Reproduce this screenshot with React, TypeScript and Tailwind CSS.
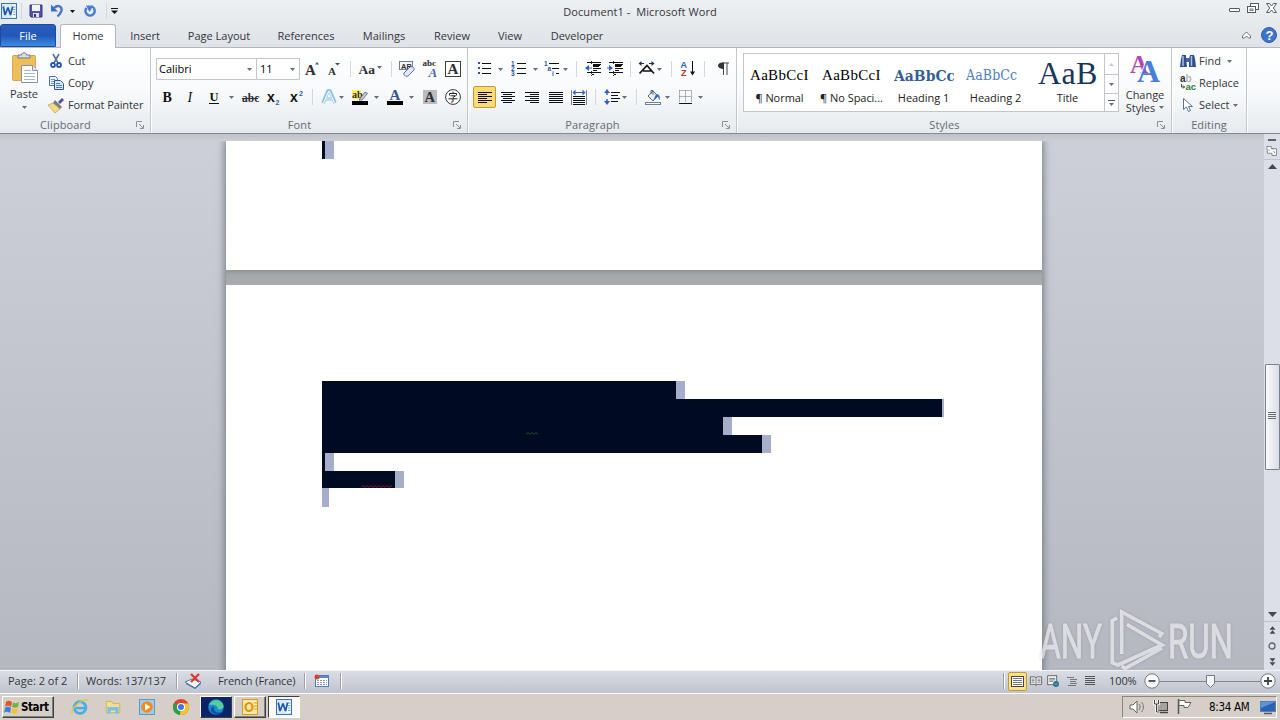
import React from 'react';

type IconProps = { className?: string };

// Small svg wrapper, everything in the ribbon is drawn on a 16px grid
const Svg: React.FC<{ className?: string; box?: string; children: React.ReactNode }> = ({
  className = '',
  box = '0 0 16 16',
  children,
}) => (
  <svg viewBox={box} className={`shrink-0 overflow-visible ${className || 'w-4 h-4'}`}>
    {children}
  </svg>
);

const Drop: React.FC<IconProps> = ({ className = '' }) => (
  <svg viewBox="0 0 5 3" className={`shrink-0 w-[5px] h-[3px] ${className}`}>
    <path d="M0 0h5L2.5 3z" fill="#6a6d72" />
  </svg>
);

const Sep: React.FC<IconProps> = ({ className = '' }) => (
  <div className={`shrink-0 w-px h-4 bg-[#d3d6da] ${className}`} />
);

const Lines: React.FC<{ rows: number[][]; color?: string }> = ({ rows, color = '#111' }) => (
  <>
    {rows.map(([x, y, w], i) => (
      <rect key={i} x={x} y={y} width={w} height="1" fill={color} />
    ))}
  </>
);

const Glyph: React.FC<{
  x: number;
  y: number;
  size: number;
  fill?: string;
  bold?: boolean;
  sans?: boolean;
  italic?: boolean;
  children: string;
}> = ({ x, y, size, fill = '#2d2f33', bold, sans, italic, children }) => (
  <text
    x={x}
    y={y}
    fontSize={size}
    fill={fill}
    fontWeight={bold ? 700 : 400}
    fontStyle={italic ? 'italic' : 'normal'}
    fontFamily={sans ? 'Liberation Sans, sans-serif' : 'Liberation Serif, serif'}
    letterSpacing="0"
  >
    {children}
  </text>
);

const WordIcon: React.FC<IconProps> = ({ className }) => (
  <Svg className={className}>
    <rect x="0.5" y="0.5" width="15" height="15" fill="#d9eaf9" stroke="#3a73b8" />
    <rect x="11" y="2" width="3.500" height="12" fill="#fff" />
    <path d="M12 4h2.500M12 6.500h2.500M12 9h2.500M12 11.500h2.500" stroke="#6f9fd4" />
    <path
      d="M2.300 3.500l1.700 8.500L7 4.500l2.500 7.500 2.200-8.500"
      fill="none"
      stroke="#1c57a8"
      strokeWidth="1.700"
      strokeLinejoin="bevel"
    />
  </Svg>
);

const Launcher: React.FC = () => (
  <svg viewBox="0 0 8 8" className="w-2 h-2">
    <path d="M.5 6V.5H6" fill="none" stroke="#8b9097" />
    <path d="M3 3l4 4M7.500 4v3.500H4" fill="none" stroke="#8b9097" />
  </svg>
);

const Group: React.FC<{ title: string; width: string; launcher?: boolean; children: React.ReactNode }> = ({
  title,
  width,
  launcher = true,
  children,
}) => (
  <div className={`${width} shrink-0 flex flex-col border-r border-[#c3c7cc] shadow-[1px_0_0_#fff]`}>
    <div className="h-[69px] flex">{children}</div>
    <div className="h-4 flex items-center">
      <span className="flex-1 text-center text-[#666b73] tracking-[0.1px]">{title}</span>
      {launcher && (
        <span className="w-[19px] pl-[5px]">
          <Launcher />
        </span>
      )}
    </div>
  </div>
);

const tabs = [
  { label: 'Insert', width: 'w-[58px]' },
  { label: 'Page Layout', width: 'w-[90px]' },
  { label: 'References', width: 'w-[84px]' },
  { label: 'Mailings', width: 'w-[72px]' },
  { label: 'Review', width: 'w-[64px]' },
  { label: 'View', width: 'w-[52px]' },
  { label: 'Developer', width: 'w-[82px]' },
];

const TitleBar: React.FC = () => (
  <div className="h-6 flex justify-between">
    <div className="w-[300px] flex items-center pl-[1px] pb-[2px]">
      <WordIcon />
      <Sep className="ml-1 bg-[#a9adb4]" />
      <Svg className="w-4 h-4 ml-[6px]">
        <path d="M2 2h12v12H3l-1-1z" fill="#5652a8" stroke="#39367f" />
        <rect x="4" y="2" width="8" height="6" fill="#f2f4fb" />
        <rect x="5" y="10" width="6" height="4" fill="#dcdff0" />
        <rect x="6" y="11" width="2" height="3" fill="#39367f" />
      </Svg>
      <Svg className="w-4 h-4 ml-[6px]">
        <path d="M4 5c4-4 8-1.500 7.500 2.500-.500 2.500-2 4-4 6" fill="none" stroke="#4874c4" strokeWidth="2.400" />
        <path d="M1 1.500v7h7z" fill="#3f6fc0" />
      </Svg>
      <svg viewBox="0 0 5 3" className="w-[5px] h-[3px] ml-[4px]">
        <path d="M0 0h5L2.500 3z" fill="#111" />
      </svg>
      <Svg className="w-4 h-4 ml-[7px]">
        <path d="M4.500 5a4.600 4.600 0 1 0 7.500.500" fill="none" stroke="#4a7acb" strokeWidth="2.500" />
        <path d="M4 2.500h7.500L7.500 9z" fill="#4a7acb" />
        <path d="M10 3.500l2.500 2" stroke="#4a7acb" strokeWidth="2" />
      </Svg>
      <Sep className="ml-[8px] bg-[#8b9098]" />
      <svg viewBox="0 0 7 6" className="w-[7px] h-[6px] ml-1">
        <path d="M0 .5h7" stroke="#111" />
        <path d="M0 2.500h7L3.500 6z" fill="#111" />
      </svg>
    </div>
    <span className="pt-[4px] tracking-[0.08px]">Document1 -&nbsp; Microsoft Word</span>
    <div className="w-[300px] flex justify-end items-start pt-[3px] pr-[3px] gap-[7px]">
      <svg viewBox="0 0 11 12" className="w-[11px] h-3">
        <rect x="0.5" y="5.500" width="10" height="3" rx="0.500" fill="#fff" stroke="#565a61" />
      </svg>
      <svg viewBox="0 0 12 12" className="w-3 h-3">
        <rect x="3.500" y="0.500" width="8" height="6" fill="#fff" stroke="#565a61" />
        <rect x="0.500" y="3.500" width="8" height="6" fill="#fff" stroke="#565a61" />
        <rect x="3" y="6" width="3" height="1.500" fill="#fff" stroke="#565a61" strokeWidth="0.800" />
      </svg>
      <svg viewBox="0 0 11 12" className="w-[11px] h-3">
        <path
          d="M.5 .5h3l2 2.500 2-2.500h3L7.300 5l3.200 4.500h-3l-2-2.500-2 2.500h-3L3.700 5z"
          fill="#fff"
          stroke="#565a61"
        />
      </svg>
    </div>
  </div>
);

const TabBar: React.FC = () => (
  <div className="h-6 flex border-b border-[#b4b9bf]">
    <div className="w-14 h-[23px] rounded-t-[3px] border border-[#1c4a9c] bg-linear-to-b from-[#2a5fbf] via-[#2257b8] to-[#3f8be0] text-white flex items-center justify-center">
      File
    </div>
    <div className="ml-1 w-14 h-6 -mb-px pb-px rounded-t-[3px] border border-b-0 border-[#b4b9bf] bg-white flex items-center justify-center">
      Home
    </div>
    <div className="flex">
      {tabs.map((tab) => (
        <span key={tab.label} className={`${tab.width} flex items-center justify-center`}>
          {tab.label}
        </span>
      ))}
    </div>
    <div className="ml-auto flex items-center gap-[10px] pr-[3px] pb-[2px]">
      <svg viewBox="0 0 9 8" className="w-[9px] h-2">
        <path d="M.5 5L4.500 1l4 4v2H6.500l-2-2-2 2h-2z" fill="#fff" stroke="#6a6e75" />
      </svg>
      <Svg>
        <circle cx="8" cy="8" r="7.500" fill="#3d74c9" stroke="#2e5ca8" />
        <Glyph x={4.500} y={12.500} size={13} fill="#fff" bold sans>
          ?
        </Glyph>
      </Svg>
    </div>
  </div>
);

const Clipboard: React.FC = () => (
  <Group title="Clipboard" width="w-[151px]">
    <div className="w-[48px] flex flex-col items-center pt-[4px]">
      <svg viewBox="0 0 28 32" className="w-7 h-8 ml-[2px]">
        <rect x="1.500" y="3.500" width="23" height="25" rx="1" fill="#f0bd5b" stroke="#d8a550" />
        <path d="M7 6V3h3.500c0-3 5-3 5 0H19v3z" fill="#d9dde2" stroke="#6f757d" />
        <path d="M10.500 13.500h11l5 5v12h-16z" fill="#fff" stroke="#8592ab" />
        <path d="M21.500 13.500v5h5" fill="#dfe6f3" stroke="#8592ab" />
        <path d="M13 18.500h7M13 21.500h11M13 24.500h11M13 27.500h11" stroke="#a9b6cd" />
      </svg>
      <span className="leading-[18px] mt-px">Paste</span>
      <Drop className="mt-[3px]" />
    </div>
    <div className="flex flex-col pt-[2px] tracking-[-0.1px]">
      <div className="h-[22px] flex items-center gap-[4px]">
        <Svg>
          <path d="M5 1l5 9M11 1L6 10" stroke="#5f7191" strokeWidth="1.600" fill="none" />
          <circle cx="5" cy="12" r="2" fill="none" stroke="#2456b0" strokeWidth="1.800" />
          <circle cx="11" cy="12" r="2" fill="none" stroke="#2456b0" strokeWidth="1.800" />
        </Svg>
        Cut
      </div>
      <div className="h-[22px] flex items-center gap-[4px]">
        <Svg>
          <path d="M1.500 1.500h6l2 2v7h-8z" fill="#eef4ff" stroke="#4d72b4" />
          <path d="M3 4.500h4M3 6.500h4M3 8.500h3" stroke="#6e96d6" />
          <path d="M6.500 5.500h6l3 3v6h-9z" fill="#dbe8fd" stroke="#2f55a0" />
          <path d="M8 8.500h4M8 10.500h6M8 12.500h6" stroke="#4d7fd0" />
        </Svg>
        Copy
      </div>
      <div className="h-[22px] flex items-center gap-[4px]">
        <Svg>
          <path d="M10 5l4-4 2 2-4 4z" fill="#5d4aa0" />
          <path d="M7 3l7 7-2 2-7-6z" fill="#777d87" />
          <path d="M0 8l5-2 7 6-5 4z" fill="#f2dc8b" stroke="#b58f2d" strokeWidth="0.600" />
        </Svg>
        Format Painter
      </div>
    </div>
  </Group>
);

const FontGroup: React.FC = () => (
  <Group title="Font" width="w-[317px]">
    <div className="flex flex-col pl-[5px]">
      <div className="h-[22px] mt-[10px] flex items-center">
        <div className="w-[101px] h-[22px] border border-[#c2c6cb] bg-white flex items-center justify-between pl-[2px] pr-[4px] text-black">
          Calibri
          <Drop />
        </div>
        <div className="w-[43px] h-[22px] border border-l-0 border-[#c2c6cb] bg-white flex items-center justify-between pl-[3px] pr-1 text-black">
          11
          <Drop />
        </div>
        <Svg className="w-4 h-4 ml-1">
          <Glyph x={1} y={14} size={15} bold>
            A
          </Glyph>
          <path d="M11 3.500h4L13 1z" fill="#3c5b93" />
        </Svg>
        <Svg className="w-4 h-4 ml-[6px]">
          <Glyph x={2} y={14} size={11} bold>
            A
          </Glyph>
          <path d="M9 2h5l-2.500 2.500z" fill="#3c4b73" />
        </Svg>
        <Sep className="ml-2" />
        <Svg className="w-4 h-4 ml-[7px]">
          <Glyph x={0.500} y={13} size={13.500} bold>
            Aa
          </Glyph>
        </Svg>
        <Drop className="ml-[3px] -mt-1" />
        <Sep className="ml-[9px]" />
        <Svg className="w-4 h-4 ml-[7px]">
          <rect x="0.500" y="0.500" width="13" height="8" fill="#f3f5f9" stroke="#727b8c" />
          <Glyph x={2} y={7.500} size={7.500} bold sans>
            AB
          </Glyph>
          <path d="M5 12l6-6c3-1 5 1 4 3l-6 6c-2 1-5-1-4-3z" fill="#e3e8f6" stroke="#5a6fa8" />
        </Svg>
        <Svg className="w-4 h-4 ml-[7px]">
          <Glyph x={0.500} y={5} size={9} bold>
            abc
          </Glyph>
          <Glyph x={6.500} y={15.500} size={13} fill="#3e66b5" bold italic>
            A
          </Glyph>
        </Svg>
        <Svg className="w-4 h-4 ml-[7px]">
          <rect x="0.500" y="0.500" width="15" height="15" fill="#fff" stroke="#3d4147" />
          <Glyph x={2.500} y={13} size={15} bold>
            A
          </Glyph>
        </Svg>
      </div>
      <div className="h-[22px] mt-[6px] flex items-center">
        <Svg className="w-4 h-4 ml-[3px]">
          <Glyph x={3.500} y={13} size={14} fill="#111" bold>
            B
          </Glyph>
        </Svg>
        <Svg className="w-4 h-4 ml-[7px]">
          <Glyph x={5.500} y={13} size={14} fill="#111" italic>
            I
          </Glyph>
        </Svg>
        <Svg className="w-4 h-4 ml-2">
          <Glyph x={3.500} y={12} size={12.500} fill="#111" bold>
            U
          </Glyph>
          <path d="M3 14.500h10" stroke="#111" />
        </Svg>
        <Drop className="ml-[7px]" />
        <Svg className="w-4 h-4 ml-2">
          <Glyph x={0} y={12.500} size={11.500} bold>
            abc
          </Glyph>
          <path d="M0 9.500h16" stroke="#333" />
        </Svg>
        <Svg className="w-4 h-4 ml-2">
          <Glyph x={1} y={13} size={14} fill="#111" bold sans>
            x
          </Glyph>
          <Glyph x={9.500} y={15.500} size={7} fill="#2d5fb5" bold sans>
            2
          </Glyph>
        </Svg>
        <Svg className="w-4 h-4 ml-[6px]">
          <Glyph x={2} y={13} size={14} fill="#111" bold sans>
            x
          </Glyph>
          <Glyph x={11} y={6.500} size={7} fill="#2d5fb5" bold sans>
            2
          </Glyph>
        </Svg>
        <Sep className="ml-[8px]" />
        <Svg className="w-4 h-4 ml-[8px]">
          <path d="M2 14L7 2h2l5 12" fill="none" stroke="#86bfe8" strokeWidth="3.400" />
          <path d="M4 10h8" stroke="#86bfe8" strokeWidth="3" />
          <path d="M2.500 14L7.500 2.500h1L13.500 14M4.500 10h7" fill="none" stroke="#f3faff" strokeWidth="1.200" />
        </Svg>
        <Drop className="ml-0.5" />
        <Svg className="w-4 h-4 ml-2">
          <rect x="0" y="1" width="9" height="9" fill="#fdf35a" />
          <Glyph x={0} y={9} size={10} bold>
            ab
          </Glyph>
          <path d="M7 11l6-8 2.500 1.500L10 11z" fill="#c7ccd4" stroke="#4f5c78" strokeWidth="0.800" />
          <rect x="0" y="12" width="16" height="4" fill="#000" />
        </Svg>
        <Drop className="ml-[6px]" />
        <Svg className="w-4 h-4 ml-2">
          <Glyph x={2.500} y={11} size={15} fill="#34528c" bold>
            A
          </Glyph>
          <rect x="0" y="12" width="16" height="4" fill="#000" />
        </Svg>
        <Drop className="ml-[6px]" />
        <Svg className="w-4 h-4 ml-2">
          <rect x="1" y="1" width="14" height="14" fill="#b9bcc0" />
          <Glyph x={2.500} y={13} size={14.500} bold>
            A
          </Glyph>
        </Svg>
        <Svg className="w-4 h-4 ml-[7px]">
          <circle cx="8" cy="8" r="7.400" fill="#fff" stroke="#333" />
          <path
            d="M8 2.500v2M4.500 6.500v-2h7v2M5.500 6.800h5L8 8.500v4c0 .700-1 .700-2 .500M3.500 9.800h9"
            fill="none"
            stroke="#222"
          />
        </Svg>
      </div>
    </div>
  </Group>
);

const ParagraphGroup: React.FC = () => (
  <Group title="Paragraph" width="w-[269px]">
    <div className="flex flex-col pl-[5px]">
      <div className="h-[22px] mt-[10px] flex items-center">
        <Svg className="w-4 h-4 ml-1">
          <rect x="1" y="1" width="2" height="2" fill="#33528f" />
          <rect x="1" y="6" width="2" height="2" fill="#33528f" />
          <rect x="1" y="11" width="2" height="2" fill="#33528f" />
          <Lines rows={[[5, 2, 9], [5, 7, 9], [5, 12, 9]]} />
        </Svg>
        <Drop className="ml-[5px]" />
        <Svg className="w-4 h-4 ml-2">
          <Glyph x={0} y={5} size={6.500} fill="#2d55a5" bold sans>
            1
          </Glyph>
          <Glyph x={0} y={10} size={6.500} fill="#2d55a5" bold sans>
            2
          </Glyph>
          <Glyph x={0} y={15} size={6.500} fill="#2d55a5" bold sans>
            3
          </Glyph>
          <Lines rows={[[6, 2, 9], [6, 7, 9], [6, 12, 9]]} />
        </Svg>
        <Drop className="ml-[6px]" />
        <Svg className="w-4 h-4 ml-[6px]">
          <Glyph x={0} y={4.500} size={6.500} fill="#2d55a5" bold sans>
            1
          </Glyph>
          <Glyph x={3.500} y={9.500} size={6.500} fill="#2d55a5" bold sans>
            a
          </Glyph>
          <Glyph x={8} y={15} size={6.500} fill="#2d55a5" bold sans>
            i
          </Glyph>
          <Lines rows={[[5, 2, 10], [8, 7, 7], [12, 12, 3]]} />
        </Svg>
        <Drop className="ml-[3px]" />
        <Sep className="ml-2" />
        <Svg className="w-4 h-4 ml-2">
          <path d="M4 4v6L0 7z" fill="#2f62b8" />
          <rect x="3" y="6.500" width="4" height="1" fill="#2f62b8" />
          <Lines rows={[[2, 1, 14], [8, 3, 8], [8, 5, 6], [8, 7, 8], [8, 9, 4], [2, 11, 14], [7, 13, 2]]} />
          <path d="M6.500 0v3M6.500 10v5" stroke="#333" strokeDasharray="1 1" />
          <rect x="8" y="3" width="7" height="2" fill="#111" />
        </Svg>
        <Svg className="w-4 h-4 ml-[6px]">
          <path d="M2 4v6l4-3z" fill="#2f62b8" />
          <rect x="0" y="6.500" width="3" height="1" fill="#2f62b8" />
          <Lines rows={[[2, 1, 14], [8, 3, 8], [8, 5, 6], [8, 7, 8], [8, 9, 4], [2, 11, 14], [7, 13, 2]]} />
          <path d="M6.500 0v3M6.500 10v5" stroke="#333" strokeDasharray="1 1" />
          <rect x="8" y="3" width="7" height="2" fill="#111" />
        </Svg>
        <Sep className="ml-[7px]" />
        <Svg className="w-4 h-4 ml-2">
          <path d="M-0.500 2.500l3-2.500v5zM15.500 2.500l-3-2.500v5z" fill="#1d2a66" />
          <path d="M2 2.500h3M10 2.500h3" stroke="#1d2a66" />
          <path d="M0.500 12.500L8 4.500l7 8M4 10h8" fill="none" stroke="#111" strokeWidth="1.700" />
        </Svg>
        <Drop className="ml-0.5" />
        <Sep className="ml-[9px]" />
        <Svg className="w-4 h-4 ml-2">
          <Glyph x={0.500} y={7} size={9} fill="#2d5fb5" bold sans>
            A
          </Glyph>
          <Glyph x={1} y={15} size={9} fill="#b03a36" bold sans>
            Z
          </Glyph>
          <path d="M12.500 0v11" stroke="#111" />
          <path d="M10 10.500h5l-2.500 4z" fill="#111" />
        </Svg>
        <Sep className="ml-2" />
        <Svg className="w-4 h-4 ml-[10px]">
          <path d="M7 2h7M8.500 2v12M12 2v12" stroke="#444" fill="none" />
          <path d="M9 1.500C5 1 3 2.500 3 4.500S5 8 9 8z" fill="#333" />
        </Svg>
      </div>
      <div className="h-[22px] mt-[6px] flex items-center">
        <div className="w-[23px] h-[22px] rounded-[2px] border border-[#c29a3a] bg-[#fcdc72] flex items-center justify-center">
          <Svg>
            <Lines rows={[[1, 3, 14], [1, 5, 9], [1, 7, 14], [1, 9, 9], [1, 11, 14], [1, 13, 9]]} />
          </Svg>
        </div>
        <Svg className="w-4 h-4 ml-1">
          <Lines rows={[[1, 3, 14], [3, 5, 9], [1, 7, 14], [3, 9, 9], [1, 11, 14], [3, 13, 9]]} />
        </Svg>
        <Svg className="w-4 h-4 ml-2">
          <Lines rows={[[1, 3, 14], [6, 5, 9], [1, 7, 14], [6, 9, 9], [1, 11, 14], [6, 13, 9]]} />
        </Svg>
        <Svg className="w-4 h-4 ml-2">
          <Lines rows={[[1, 3, 14], [1, 5, 14], [1, 7, 14], [1, 9, 14], [1, 11, 14], [1, 13, 14]]} />
        </Svg>
        <Svg className="w-4 h-4 ml-[7px]">
          <path d="M0.500 1v15M15.500 1v15" stroke="#7b828c" />
          <path d="M1.500 3.500l3-3v6zM14.500 3.500l-3-3v6z" fill="#2f62b8" />
          <path d="M4 3.500h8" stroke="#2f62b8" />
          <Lines rows={[[2, 7, 12], [2, 9, 12], [2, 11, 12], [2, 13, 12], [2, 15, 12]]} />
        </Svg>
        <Sep className="ml-[8px]" />
        <Svg className="w-4 h-4 ml-2">
          <path d="M3 0l3 4H0zM3 16l3-4H0z" fill="#2f62b8" />
          <path d="M3 3v3M3 10v3" stroke="#2f62b8" strokeWidth="1.500" />
          <Lines rows={[[7, 3, 9], [7, 6, 7], [7, 9, 9], [7, 12, 7]]} />
        </Svg>
        <Drop className="ml-0.5" />
        <Sep className="ml-[9px]" />
        <Svg className="w-4 h-4 ml-2">
          <path d="M3 7l5-5 5 5-5 5z" fill="#eef2f8" stroke="#56647c" />
          <path d="M6 5V1.500h2V6" fill="none" stroke="#56647c" />
          <path d="M11 5c3 0 4 2 4 6-1-1-2-2-2-4l-5 5z" fill="#3a6cc0" />
          <rect x="0.500" y="13.500" width="15" height="2" fill="#fff" stroke="#6c7f9f" />
        </Svg>
        <Drop className="ml-1" />
        <Svg className="w-4 h-4 ml-2">
          <path
            d="M1.500 1.500h12v12M1.500 1.500v12M7.500 1.500v12M1.500 7.500h12"
            fill="none"
            stroke="#6b7078"
            strokeDasharray="1 1"
          />
          <path d="M1 14.500h13" stroke="#111" strokeWidth="1" />
        </Svg>
        <Drop className="ml-[4px]" />
      </div>
    </div>
  </Group>
);

const styles = [
  {
    label: '¶ Normal',
    sample: 'AaBbCcI',
    look: "font-['Liberation_Serif',serif] text-[15px] tracking-[0.3px] text-black pt-[3px]",
  },
  {
    label: '¶ No Spaci...',
    sample: 'AaBbCcI',
    look: "font-['Liberation_Serif',serif] text-[15px] tracking-[0.3px] text-black pt-[3px]",
  },
  {
    label: 'Heading 1',
    sample: 'AaBbCc',
    look: "font-['DejaVu_Serif_Condensed','DejaVu_Serif',serif] text-[15.5px] font-bold text-[#365f91] pt-[5px]",
  },
  {
    label: 'Heading 2',
    sample: 'AaBbCc',
    look: "font-['DejaVu_Serif_Condensed','DejaVu_Serif',serif] text-[14px] text-[#4f81bd] tracking-[0.1px] pt-[4px]",
  },
  {
    label: 'Title',
    sample: 'AaB',
    look: "font-['Liberation_Serif',serif] text-[32px] text-[#17365d] tracking-[0.3px]",
  },
];

const StylesGroup: React.FC = () => (
  <Group title="Styles" width="w-[435px]">
    <div className="mt-[5px] ml-[6px] w-[376px] h-[59px] border border-[#c2c6cb] bg-white flex">
      {styles.map((style) => (
        <div key={style.label} className="w-[72px] h-full flex flex-col items-center">
          <div className="w-[60px] h-[34px] flex items-end justify-start overflow-hidden">
            <span className={`leading-[30px] h-[30px] flex items-center whitespace-nowrap ${style.look}`}>
              {style.sample}
            </span>
          </div>
          <span className="leading-[18px] mt-px pr-px text-[#222] tracking-[-0.05px]">{style.label}</span>
        </div>
      ))}
      <div className="w-[14px] h-full border-l border-[#c2c6cb] flex flex-col">
        <div className="h-5 flex items-center justify-center">
          <svg viewBox="0 0 5 3" className="w-[5px] h-[3px]">
            <path d="M0 3h5L2.500 0z" fill="#c6c9ce" />
          </svg>
        </div>
        <div className="h-5 border-y border-[#c2c6cb] flex items-center justify-center">
          <Drop />
        </div>
        <div className="flex-1 flex flex-col gap-0.5 items-center justify-center">
          <span className="w-[7px] h-px bg-[#55585e]" />
          <Drop />
        </div>
      </div>
    </div>
    <div className="flex-1 flex flex-col items-center pt-[5px] tracking-[-0.05px]">
      <svg viewBox="0 0 30 30" className="w-[30px] h-[30px] overflow-visible">
        <Glyph x={0} y={20} size={25} fill="#b14ab0" bold>
          A
        </Glyph>
        <Glyph x={6} y={29} size={34} fill="#fff" bold>
          A
        </Glyph>
        <Glyph x={7} y={29} size={32} fill="#4a80d4" bold>
          A
        </Glyph>
      </svg>
      <span className="leading-[13px] mt-[5px]">Change</span>
      <span className="leading-[13px] flex items-center gap-1">
        Styles <Drop />
      </span>
    </div>
  </Group>
);

const EditingGroup: React.FC = () => (
  <Group title="Editing" width="w-[75px]" launcher={false}>
    <div className="flex flex-col pt-[2px] pl-2">
      <div className="h-[22px] flex items-center">
        <Svg>
          <path d="M2 2h4v4l1 8H0l1-8zM10 2h4l1 4 1 8H9V6z" fill="#2f4c8e" />
          <path d="M3 3v10M11.500 3v10" stroke="#a9c2ea" strokeWidth="1.500" />
          <rect x="6" y="5" width="4" height="4" fill="#46609c" />
        </Svg>
        <span className="ml-[3px]">Find</span>
        <Drop className="ml-[6px]" />
      </div>
      <div className="h-[22px] flex items-center">
        <Svg>
          <Glyph x={0} y={7} size={10} bold sans>
            a
          </Glyph>
          <Glyph x={5.500} y={7} size={10} fill="#b3b6bb" bold sans>
            b
          </Glyph>
          <Glyph x={5.500} y={15} size={9.500} fill="#2c7a3a" bold sans>
            ac
          </Glyph>
          <path d="M1.500 9v3h3M3 10.500l1.500 1.500L3 13.500" fill="none" stroke="#444" />
        </Svg>
        <span className="ml-[3px]">Replace</span>
      </div>
      <div className="h-[22px] flex items-center">
        <Svg>
          <path d="M3.500 1.500v11l3-2.500 2 4.500 2-1-2-4h4z" fill="#fff" stroke="#5e7290" />
        </Svg>
        <span className="ml-[3px]">Select</span>
        <Drop className="ml-1" />
      </div>
    </div>
  </Group>
);

// Selected text lines: dark run followed by the paragraph mark
const selection = [
  { dark: 'w-[354px]', mark: 'w-[9px]', height: 'h-[18px]' },
  { dark: 'w-[620px]', mark: 'w-[2px]', height: 'h-[18px]' },
  { dark: 'w-[401px]', mark: 'w-[9px]', height: 'h-[18px]', squiggle: 'ml-[204px] w-3', color: '#1c5c33' },
  { dark: 'w-[440px]', mark: 'w-[9px]', height: 'h-[18px]' },
  { dark: 'w-[3px]', mark: 'w-[9px]', height: 'h-[18px]' },
  { dark: 'w-[73px]', mark: 'w-[9px]', height: 'h-[17px]', squiggle: 'ml-[39px] w-[31px]', color: '#a01c35' },
  { dark: 'w-0', mark: 'w-[7px]', height: 'h-[19px]' },
];

const Squiggle: React.FC<{ className: string; color: string }> = ({ className, color }) => (
  <svg viewBox="0 0 32 3" preserveAspectRatio="xMinYMin slice" className={`h-[3px] ${className}`}>
    <path
      d="M0 2.500l2-2 2 2 2-2 2 2 2-2 2 2 2-2 2 2 2-2 2 2 2-2 2 2 2-2 2 2 2-2 2 2"
      fill="none"
      stroke={color}
      strokeWidth="0.900"
    />
  </svg>
);

const Workspace: React.FC = () => (
  <div className="h-[536px] flex bg-linear-to-b from-[#cdd0d9] to-[#b5b8c1] overflow-hidden">
    <div className="w-[1264px] flex flex-col">
      <div className="w-full h-[7px] shrink-0 bg-linear-to-b from-[#bfc2c7] to-[#cbced4]" />
      <div className="w-full flex-1 overflow-hidden pl-[226px]">
        <div className="w-[816px] flex flex-col shadow-[0_0_8px_1px_#6f7378]">
          <div className="h-[129px] bg-white pl-24 flex">
            <div className="w-[3px] h-[18px] bg-[#000b21]" />
            <div className="w-[9px] h-[18px] bg-[#a6aecb]" />
          </div>
          <div className="h-[15px] bg-linear-to-b from-[#8f9396] via-[#a3a7aa] via-30% to-[#a9adb0]" />
          <div className="h-[500px] bg-white pl-24 pt-24">
            {selection.map((line, i) => (
              <div key={i} className={`flex ${line.height}`}>
                <div className={`${line.dark} bg-[#000b21] flex items-end`}>
                  {line.squiggle && <Squiggle className={line.squiggle} color={line.color} />}
                </div>
                <div className={`${line.mark} bg-[#a6aecb]`} />
              </div>
            ))}
          </div>
        </div>
      </div>
    </div>
    <div className="w-4 bg-[#dcdfe7] flex flex-col items-center">
      <div className="h-[7px] w-full flex justify-center items-end">
        <span className="w-2 h-[2px] bg-[#5f636b]" />
      </div>
      <Svg className="w-3 h-3 mt-1">
        <path d="M1 2h6v3h7v9H8v-3H2z" fill="#fff" stroke="#666b73" />
        <path d="M3 6l2 2M10 8l2 3M8 4l2 2" stroke="#666b73" />
      </Svg>
      <div className="w-full h-px mt-[2px] bg-[#c0c4cc]" />
      <svg viewBox="0 0 9 5" className="w-[9px] h-[5px] mt-1">
        <path d="M0 5h9L4.500 0z" fill="#44484f" />
      </svg>
      <div className="w-[15px] h-[106px] mt-[195px] border border-[#7c828c] rounded-[1px] bg-linear-to-r from-[#fafbfd] to-[#d8dce6] flex flex-col items-center justify-center gap-px pb-1">
        <span className="w-2 h-px bg-[#6a6e76]" />
        <span className="w-2 h-px bg-[#6a6e76]" />
        <span className="w-2 h-px bg-[#6a6e76]" />
        <span className="w-2 h-px bg-[#6a6e76]" />
      </div>
      <svg viewBox="0 0 9 5" className="w-[9px] h-[5px] mt-[142px]">
        <path d="M0 0h9L4.500 5z" fill="#44484f" />
      </svg>
      <div className="w-full h-px mt-[4px] bg-[#c0c4cc]" />
      <svg viewBox="0 0 7 8" className="w-[7px] h-2 mt-1">
        <path d="M1 3.500h5L3.500.5zM1 7.500h5L3.500 4.500z" fill="#44484f" stroke="#44484f" strokeWidth="0.500" />
      </svg>
      <svg viewBox="0 0 8 8" className="w-2 h-2 mt-2">
        <circle cx="4" cy="4" r="3" fill="none" stroke="#5c6068" strokeWidth="1.300" />
      </svg>
      <svg viewBox="0 0 7 8" className="w-[7px] h-2 mt-2">
        <path d="M1 .5h5L3.500 3.500zM1 4.500h5L3.500 7.500z" fill="#44484f" stroke="#44484f" strokeWidth="0.500" />
      </svg>
    </div>
  </div>
);

const StatusSep: React.FC<IconProps> = ({ className = '' }) => (
  <div className={`w-px h-4 bg-[#9ba0ab] shadow-[1px_0_0_#fff] ${className}`} />
);

const StatusBar: React.FC = () => (
  <div className="h-[23px] flex items-center pb-[2px] border-t border-[#f4f5f8] bg-linear-to-b from-[#dadde4] to-[#c0c4ce]">
    <span className="ml-2 w-[69px]">Page: 2 of 2</span>
    <StatusSep />
    <span className="ml-2 w-[90px] tracking-[-0.05px]">Words: 137/137</span>
    <StatusSep />
    <Svg className="w-4 h-4 ml-2">
      <path d="M0 9l7-3 9 3-6 6z" fill="#f5f7fb" stroke="#5a78a8" />
      <path d="M1 10l9 5 6-5v1l-6 5-9-5z" fill="#3868b0" />
      <path d="M6 1l8 8M14 1L6 9" stroke="#d8392c" strokeWidth="2.200" />
    </Svg>
    <span className="ml-[17px] w-[86px] tracking-[-0.1px]">French (France)</span>
    <StatusSep />
    <Svg className="w-4 h-4 ml-[9px]">
      <rect x="1.500" y="2.500" width="13" height="11" fill="#fff" stroke="#5677b2" />
      <path d="M1.500 3h13v2h-13z" fill="#5d88cf" />
      <path d="M3 7.500h10M3 9.500h10M3 11.500h10" stroke="#7b9bd0" strokeDasharray="2 1" />
      <circle cx="3" cy="4" r="2.500" fill="#d3452e" />
    </Svg>
    <StatusSep className="ml-[10px]" />
    <StatusSep className="ml-auto" />
    <div className="ml-[4px] w-[19px] h-[19px] rounded-[2px] border border-[#c29a3a] bg-[#fce08a] flex items-center justify-center">
      <svg viewBox="0 0 13 13" className="w-[13px] h-[13px]">
        <rect x="0.500" y="1.500" width="12" height="10" fill="#fff" stroke="#444" />
        <path d="M2 3.500h9M2 5.500h9M2 7.500h9M2 9.500h9" stroke="#777" />
      </svg>
    </div>
    <Svg className="w-3 h-3 ml-[3px]">
      <path d="M.500 2.500h6l1.500 1 1.500-1h6v10h-6L8 14l-1.500-1.500h-6zM8 3.500V14" fill="#f4f5f7" stroke="#444" />
      <path d="M2 5.500h4M2 7.500h4M2 9.500h4M10 5.500h4M10 7.500h4M10 9.500h4" stroke="#666" />
    </Svg>
    <Svg className="w-3 h-3 ml-[5px]">
      <rect x="1" y="1" width="12" height="12" fill="#f4f5f7" stroke="#444" />
      <path d="M3 4.500h8M3 6.500h8M3 8.500h5" stroke="#555" />
      <circle cx="12" cy="12" r="4" fill="#2d74a0" />
      <path d="M10 11l2 2 2-2" stroke="#7fc97d" fill="none" />
    </Svg>
    <svg viewBox="0 0 12 12" className="w-3 h-3 ml-[7px]">
      <path d="M1 2.500h7M4 4.500h7M4 6.500h6M4 8.500h7M2 10.500h8" stroke="#777" />
    </svg>
    <svg viewBox="0 0 12 12" className="w-3 h-3 ml-[6px]">
      <path d="M1 1.500h10M1 3.500h10M1 5.500h10M1 7.500h10M1 9.500h10" stroke="#555" />
    </svg>
    <span className="ml-[13px] w-[28px] tracking-[-0.1px]">100%</span>
    <Svg className="w-4 h-4 ml-[7px]">
      <circle cx="8" cy="8" r="7.200" fill="#f8f9fb" stroke="#74787f" />
      <path d="M4.500 8h7" stroke="#444" strokeWidth="1.800" />
    </Svg>
    <div className="w-[100px] h-4 flex items-center">
      <span className="w-[46px] h-px bg-[#84888f]" />
      <svg viewBox="0 0 9 13" className="w-[9px] h-[13px]">
        <path d="M.5.5h8v8l-4 4-4-4z" fill="#f6f7fa" stroke="#74787f" />
      </svg>
      <span className="w-[45px] h-px bg-[#84888f]" />
    </div>
    <Svg className="w-4 h-4 mr-[4px]">
      <circle cx="8" cy="8" r="7.200" fill="#f8f9fb" stroke="#74787f" />
      <path d="M4 8h8M8 4v8" stroke="#444" strokeWidth="1.800" />
    </Svg>
  </div>
);

const Taskbar: React.FC = () => (
  <div className="h-[27px] flex items-center border-t border-[#fff] bg-[#d6cfc7] font-['DejaVu_Sans_Condensed','DejaVu_Sans',sans-serif] text-black">
    <div className="ml-[2px] w-[52px] h-[22px] border border-t-white border-l-white border-r-[#404040] border-b-[#404040] shadow-[inset_-1px_-1px_0_#808080] flex items-center pl-[1px]">
      <Svg>
        <path d="M2 3c2-2 4-1 6 0L7 8C5 7 3 6 1 8z" fill="#e2562c" />
        <path d="M9 3.500c2 1 4 1 6-.500L14 8c-2 1-4 1-6 0z" fill="#6fb43c" />
        <path d="M1 9c2-2 4-1 6 0l-1 5c-2-1-4-2-6 0z" fill="#3b7fd4" />
        <path d="M8 9.500c2 1 4 1 6-.500l-1 5c-2 1-4 1-6 0z" fill="#f4c22e" />
      </Svg>
      <span className="font-bold text-[11.5px] tracking-[-0.4px] ml-px">Start</span>
    </div>
    <Svg className="w-[18px] h-[18px] ml-[17px]">
      <circle cx="8" cy="8.500" r="5.200" fill="none" stroke="#49aee8" strokeWidth="2.600" />
      <path d="M4 9h9" stroke="#49aee8" strokeWidth="2.200" />
      <path d="M1 14C-1 10 10 0 15 2" fill="none" stroke="#e9c63d" strokeWidth="1.300" />
    </Svg>
    <Svg className="w-[18px] h-[18px] ml-[15px]">
      <path d="M2 3h5l1 2h6v8H2z" fill="#f3df92" stroke="#cfb04e" strokeWidth="0.800" />
      <path d="M3 14V8h10v6h-3v-3H6v3z" fill="#7dc0e8" />
    </Svg>
    <Svg className="w-4 h-4 ml-[17px]">
      <rect x="0.500" y="0.500" width="15" height="15" fill="#9dcdf0" stroke="#5a9bcc" />
      <circle cx="8" cy="8" r="5.800" fill="#f38a1e" />
      <path d="M6 4.500v7l5.500-3.500z" fill="#fff" />
    </Svg>
    <Svg className="w-4 h-4 ml-[18px]">
      <circle cx="8" cy="8" r="8" fill="#e0432f" />
      <path d="M8 8L1 4a8 8 0 0 0 6 12z" fill="#2f9e4c" />
      <path d="M8 8h8a8 8 0 0 1-9 8z" fill="#f7c62f" />
      <path d="M8 4.500h7.200A8 8 0 0 1 16 8H8z" fill="#f7c62f" />
      <circle cx="8" cy="8" r="4" fill="#fff" />
      <circle cx="8" cy="8" r="3" fill="#3b78e0" />
    </Svg>
    <div className="ml-[11px] w-8 h-[22px] border border-t-white border-l-white border-r-[#404040] border-b-[#404040] bg-[#0b2467] flex items-center justify-center">
      <Svg>
        <circle cx="8" cy="8" r="7.800" fill="#1c86d0" />
        <path d="M1 6c2-6 13-7 14.500 1 .300 3-4 4-6 3 1-4-5-5-8.500-4z" fill="#55cf9a" />
        <path d="M6 8c-1 4 3 7 8 5-4 5-12 1-11-3 .500-1.500 1.500-2 3-2z" fill="#0f4fa0" />
      </Svg>
    </div>
    <div className="ml-[2px] w-8 h-[22px] border border-t-white border-l-white border-r-[#404040] border-b-[#404040] shadow-[inset_-1px_-1px_0_#808080] flex items-center justify-center">
      <Svg>
        <rect x="0.500" y="0.500" width="15" height="15" fill="#fbe7a4" stroke="#d59a22" />
        <ellipse cx="7" cy="8" rx="3.500" ry="4" fill="none" stroke="#dd9416" strokeWidth="2.200" />
        <path d="M12 4h3M12 7h3M12 10h3" stroke="#d59a22" />
      </Svg>
    </div>
    <div className="ml-[2px] w-8 h-[22px] border border-t-[#404040] border-l-[#404040] border-r-white border-b-white bg-[#fbfaf9] flex items-center justify-center">
      <WordIcon />
    </div>
    <div className="ml-auto mr-[3px] w-[155px] h-[22px] border border-t-[#8c867e] border-l-[#8c867e] border-r-white border-b-white flex items-center pl-[6px]">
      <Svg>
        <path d="M1 6h3l4-4v12l-4-4H1z" fill="#fff" stroke="#666" />
        <path d="M10 5c1.500 2 1.500 4 0 6M12.500 3c2.500 3 2.500 7 0 10" fill="none" stroke="#777" />
      </Svg>
      <Svg className="w-4 h-4 ml-[8px]">
        <rect x="4.500" y="3.500" width="10" height="8" fill="#a3a3a0" stroke="#444" />
        <path d="M7 13.500h8" stroke="#444" strokeWidth="1.500" />
        <path d="M1.500 1v4h4V1M3.500 5v8h3" fill="none" stroke="#fff" strokeWidth="2.500" />
        <path d="M1.500 1v4h4V1M3.500 5v8h3" fill="none" stroke="#444" />
      </Svg>
      <Svg className="w-4 h-4 ml-[8px]">
        <path d="M1.500 0v15" stroke="#555" strokeWidth="1.500" />
        <path d="M2 1.500h6v2h6l-3 5H7v-2H2z" fill="#fff" stroke="#666" />
      </Svg>
      <span className="ml-[16px] w-[44px] text-[11.500px] tracking-[-0.3px] whitespace-nowrap">8:34 AM</span>
      <Svg className="w-4 h-4 ml-[7px]">
        <rect x="0.500" y="2.500" width="15" height="10" fill="#2a63b5" stroke="#5d7fae" />
        <path d="M1 3h14L1 9z" fill="#5a94dc" />
        <path d="M4 14.500h8" stroke="#555" strokeWidth="1.500" />
      </Svg>
    </div>
  </div>
);

const Watermark: React.FC = () => (
  <svg
    viewBox="0 0 196 64"
    className="absolute left-[1038px] top-[608px] w-[196px] h-16 drop-shadow-[0_0_1.5px_rgba(90,95,105,0.45)]"
  >
    <g opacity="0.62" fill="#fff" stroke="#fff" strokeWidth="0.9" fontSize="49" fontFamily="Roboto, sans-serif">
      <text x="2" y="50" textLength="62" lengthAdjust="spacingAndGlyphs">
        ANY
      </text>
      <text x="130" y="50" textLength="65" lengthAdjust="spacingAndGlyphs">
        RUN
      </text>
      <path
        d="M79 10l-4.700 2.700v42L80 57l44-20-35-20.500M83.700 46V4l40 21.500-2.500 3.500M83.700 58l3.300 2.500L124 40"
        fill="none"
        strokeWidth="3.600"
      />
    </g>
  </svg>
);

const App: React.FC = () => (
  <div className="relative w-[1280px] h-[720px] overflow-hidden font-['Open_Sans','Noto_Sans',sans-serif] text-[11px] leading-4 text-[#33363b] whitespace-nowrap">
    <div className="bg-linear-to-b from-[#edf0f3] to-[#dfe2e6]">
      <TitleBar />
      <TabBar />
    </div>
    <div className="h-[86px] flex border-b border-[#868b92] bg-linear-to-b from-white via-[#f8fafb] to-[#e6eaee]">
      <Clipboard />
      <FontGroup />
      <ParagraphGroup />
      <StylesGroup />
      <EditingGroup />
    </div>
    <Workspace />
    <StatusBar />
    <Taskbar />
    <Watermark />
  </div>
);

export default App;
